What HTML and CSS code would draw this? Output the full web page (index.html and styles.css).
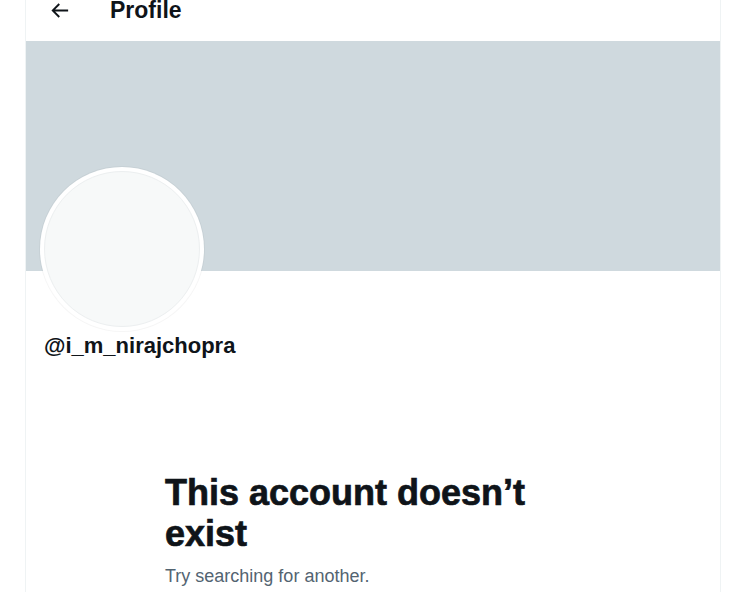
FILE: index.html
```html
<!DOCTYPE html>
<html lang="en">

<head>
    <meta charset="UTF-8">
    <meta name="viewport" content="width=device-width, initial-scale=1.0">
    <title>Profile</title>
    <link rel="stylesheet" href="styles.css">
</head>

<body>
    <main class="column">
        <header class="top-bar">
            <div class="top-row">
                <button class="back-btn" aria-label="Back">
                    <svg viewBox="0 0 24 24" width="23" height="23">
                        <path d="M7.414 13l5.043 5.04-1.414 1.42L3.586 12l7.457-7.46 1.414 1.42L7.414 11H21v2H7.414z"></path>
                    </svg>
                </button>
                <h2 class="top-title">Profile</h2>
            </div>
        </header>

        <div class="banner"></div>

        <div class="profile-info">
            <div class="avatar">
                <div class="avatar-inner"></div>
            </div>
            <div class="handle">@i_m_nirajchopra</div>
        </div>

        <div class="empty-state">
            <h1 class="empty-title">This account doesn’t exist</h1>
            <p class="empty-text">Try searching for another.</p>
        </div>
    </main>
</body>

</html>
```

FILE: styles.css
```css
* {
    box-sizing: border-box;
}

body {
    margin: 0;
    background: #ffffff;
    font-family: "Liberation Sans", Arial, sans-serif;
    color: #0f1419;
    overflow: hidden;
}

.column {
    margin-left: 25px;
    width: 696px;
    min-height: 600px;
    border-left: 1px solid #eff3f4;
    border-right: 1px solid #eff3f4;
}

.top-bar {
    height: 41px;
}

.top-row {
    display: flex;
    align-items: center;
    height: 20px;
    padding-left: 22px;
}

.back-btn {
    display: flex;
    padding: 0;
    border: none;
    background: none;
    width: 23px;
    height: 23px;
}

.back-btn svg {
    fill: #0f1419;
}

.top-title {
    margin: 0 0 0 39px;
    font-size: 23px;
    line-height: 23px;
    font-weight: 700;
}

.banner {
    height: 230px;
    background: #cfd9de;
}

.profile-info {
    padding-left: 14px;
}

.avatar {
    width: 164px;
    height: 164px;
    margin-top: -104px;
    padding: 4px;
    border-radius: 50%;
    background: #ffffff;
    box-shadow: 0 0 0 1px rgba(15, 20, 25, 0.04);
}

.avatar-inner {
    width: 100%;
    height: 100%;
    border-radius: 50%;
    background: #f7f9f9;
    border: 1px solid #eceff0;
}

.handle {
    margin-top: 2px;
    padding-left: 4px;
    font-size: 22px;
    line-height: 26px;
    font-weight: 700;
}

.empty-state {
    width: 416px;
    margin: 113px auto 0;
}

.empty-title {
    margin: 0;
    font-size: 36px;
    line-height: 41px;
    font-weight: 700;
    -webkit-text-stroke: 0.7px #0f1419;
}

.empty-text {
    margin: 10px 0 0;
    font-size: 18px;
    line-height: 24px;
    color: #536471;
}
```
